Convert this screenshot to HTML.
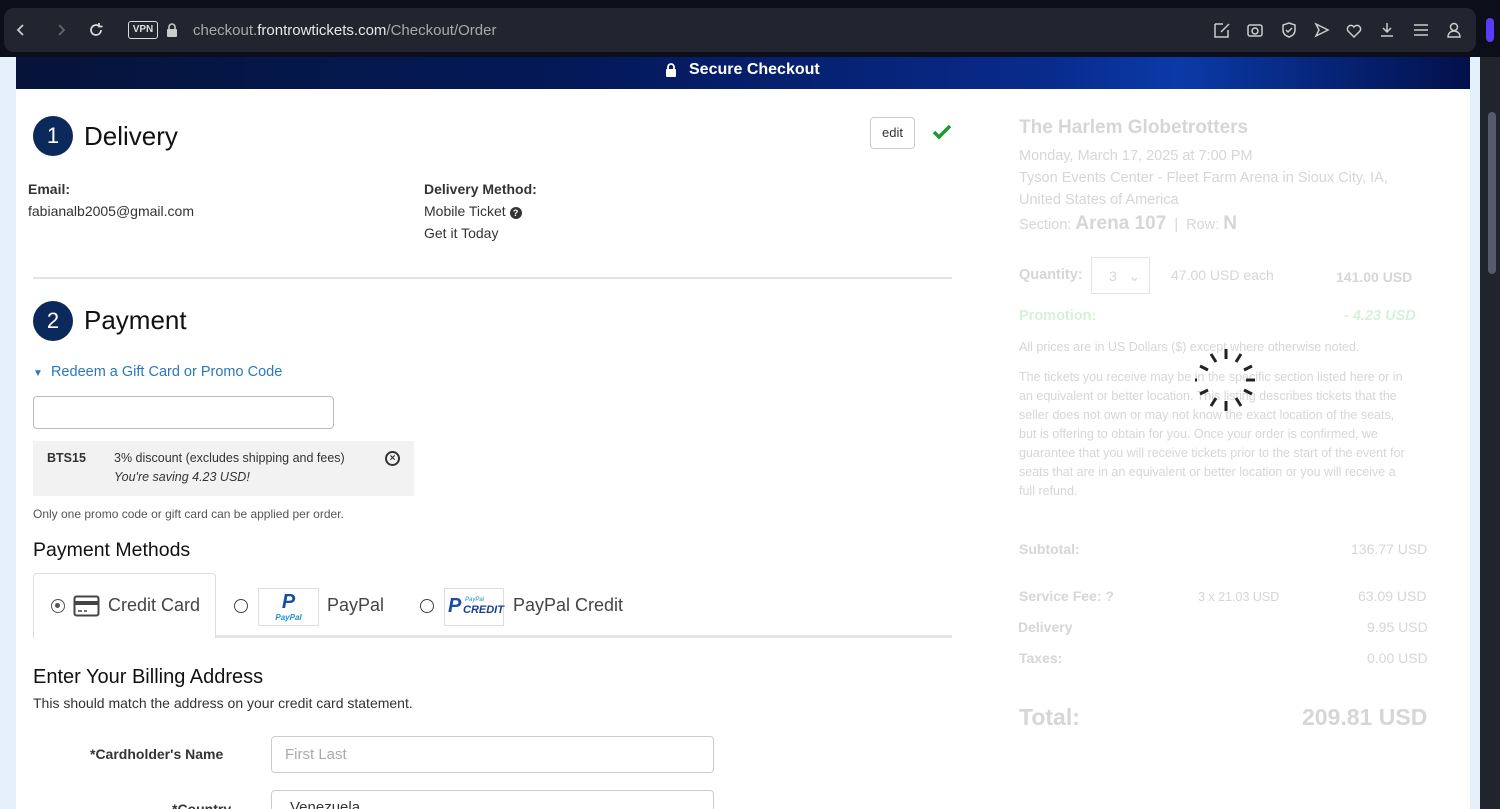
<!DOCTYPE html>
<html><head><meta charset="utf-8"><style>
*{margin:0;padding:0;box-sizing:border-box}
body{width:1500px;height:809px;overflow:hidden;background:#0c0e19;font-family:"Liberation Sans",Arial,sans-serif;position:relative}
.a{position:absolute;white-space:nowrap}
.tb{left:4px;top:8px;width:1472px;height:44px;background:#22242f;border-radius:10px}
.page{left:0;top:57px;width:1480px;height:752px;background:#fff;overflow:hidden}
.num{width:40px;height:40px;border-radius:50%;background:#0b2a5b;color:#fff;font-size:22px;text-align:center;line-height:40px}
.h2{font-size:26px;color:#111}
.g{color:#d6d6d6}
svg{position:absolute}
</style></head><body>
<div class="a tb"></div>
<svg style="left:14px;top:22px" width="14" height="16" viewBox="0 0 14 16"><path d="M9 3L4 8l5 5" stroke="#ccc" stroke-width="1.8" fill="none"/></svg>
<svg style="left:54px;top:22px" width="14" height="16" viewBox="0 0 14 16"><path d="M5 3l5 5-5 5" stroke="#666" stroke-width="1.8" fill="none"/></svg>
<svg style="left:87px;top:21px" width="18" height="18" viewBox="0 0 18 18"><path d="M14 9a5 5 0 1 1-2-4M12 2v3.5h3.5" stroke="#ddd" stroke-width="1.7" fill="none"/></svg>
<div class="a" style="left:128px;top:21px;width:30px;height:18px;border:1.5px solid #ddd;border-radius:3px;color:#ddd;font-size:10px;font-weight:bold;text-align:center;line-height:15px">VPN</div>
<svg style="left:165px;top:22px" width="14" height="16" viewBox="0 0 14 16"><rect x="2" y="7" width="10" height="8" rx="1" fill="#ccc"/><path d="M4 7V5a3 3 0 0 1 6 0v2" stroke="#ccc" stroke-width="1.6" fill="none"/></svg>
<div class="a" style="left:193px;top:22px;font-size:15px;color:#aaa">checkout.<span style="color:#e8e8e8">frontrowtickets.com</span>/Checkout/Order</div>
<svg style="left:1212px;top:20px" width="260" height="20" viewBox="0 0 260 20" fill="none" stroke="#ccc" stroke-width="1.5">
<path d="M3 4h8M3 4v13h13v-7M9 12l8-8"/>
<rect x="36" y="5" width="14" height="11" rx="2"/><circle cx="43" cy="11" r="3"/>
<path d="M77 3l6 2v5c0 4-3 6-6 7-3-1-6-3-6-7V5zM74 10l2 2 4-4"/>
<path d="M104 4l12 6-12 6 3-6z"/>
<path d="M142 17l-6-6a3.5 3.5 0 0 1 6-4 3.5 3.5 0 0 1 6 4z"/>
<path d="M175 3v9M171 8l4 4 4-4M169 16h12"/>
<path d="M202 5h14M202 10h14M202 15h14"/>
<circle cx="242" cy="7" r="3.5"/><path d="M236 17c0-4 3-6 6-6s6 2 6 6z"/>
</svg>
<div class="a" style="left:1486px;top:18px;width:8px;height:24px;background:#5b3cf5;border-radius:4px"></div>
<div class="a page">
 <div class="a" style="left:0;top:0;width:16px;height:752px;background:#e6f0fa"></div>
 <div class="a" style="left:1470px;top:0;width:10px;height:752px;background:#e4f0fb"></div>
 <div class="a" style="left:16px;top:0;width:1454px;height:32px;background:linear-gradient(90deg,#06143a,#04195a 40%,#082a8a 70%,#0a3aa8 80%,#03104a)"></div>
 <svg style="left:665px;top:6px" width="12" height="14" viewBox="0 0 12 14"><rect x="1" y="6" width="10" height="8" rx="1" fill="#fff"/><path d="M3 6V4a3 3 0 0 1 6 0v2" stroke="#fff" stroke-width="1.8" fill="none"/></svg>
 <div class="a" style="left:689px;top:4px;color:#fff;font-weight:bold;font-size:16px">Secure Checkout</div>

 <div class="a num" style="left:33px;top:59px">1</div>
 <div class="a h2" style="left:84px;top:64px">Delivery</div>
 <div class="a" style="left:870px;top:60px;width:45px;height:32px;border:1px solid #ccc;border-radius:4px;font-size:13px;text-align:center;line-height:30px;color:#333">edit</div>
 <svg style="left:932px;top:67px" width="20" height="16" viewBox="0 0 20 16"><path d="M2 8l5 5L18 2" stroke="#1e9a2a" stroke-width="3.5" fill="none"/></svg>
 <div class="a" style="left:28px;top:124px;font-size:14px;font-weight:bold;color:#333">Email:</div>
 <div class="a" style="left:28px;top:146px;font-size:14px;color:#333">fabianalb2005@gmail.com</div>
 <div class="a" style="left:424px;top:124px;font-size:14px;font-weight:bold;color:#333">Delivery Method:</div>
 <div class="a" style="left:424px;top:146px;font-size:14px;color:#333">Mobile Ticket <span style="display:inline-block;width:12px;height:12px;border-radius:50%;background:#333;color:#fff;font-size:9px;text-align:center;line-height:12px;font-weight:bold">?</span></div>
 <div class="a" style="left:424px;top:168px;font-size:14px;color:#333">Get it Today</div>
 <div class="a" style="left:33px;top:220px;width:919px;height:2px;background:#e4e4e4"></div>

 <div class="a num" style="left:33px;top:244px">2</div>
 <div class="a h2" style="left:84px;top:248px">Payment</div>
 <div class="a" style="left:33px;top:307px;font-size:14.5px;color:#2a77c0"><span style="font-size:10px">▼</span>&nbsp; Redeem a Gift Card or Promo Code</div>
 <div class="a" style="left:33px;top:339px;width:301px;height:33px;border:1px solid #bbb;border-radius:4px"></div>
 <div class="a" style="left:33px;top:384px;width:381px;height:55px;background:#f2f2f2"></div>
 <div class="a" style="left:47px;top:394px;font-size:12.5px;font-weight:bold;color:#333">BTS15</div>
 <div class="a" style="left:114px;top:394px;font-size:12.5px;color:#333">3% discount (excludes shipping and fees)</div>
 <div class="a" style="left:114px;top:413px;font-size:12.5px;font-style:italic;color:#333">You're saving 4.23 USD!</div>
 <div class="a" style="left:385px;top:394px;width:15px;height:15px;border:2px solid #333;border-radius:50%;font-size:10px;text-align:center;line-height:11px;font-weight:bold;color:#333">×</div>
 <div class="a" style="left:33px;top:450px;font-size:12px;color:#555">Only one promo code or gift card can be applied per order.</div>
 <div class="a" style="left:33px;top:482px;font-size:19.5px;color:#111">Payment Methods</div>
 <div class="a" style="left:33px;top:578px;width:919px;height:3px;background:#e4e4e4"></div>
 <div class="a" style="left:33px;top:516px;width:183px;height:65px;background:#fff;border:1px solid #ddd;border-bottom:none;border-radius:4px 4px 0 0"></div>
 <div class="a" style="left:51px;top:542px;width:14px;height:14px;border:1.5px solid #555;border-radius:50%"><div style="margin:3px;width:5px;height:5px;border-radius:50%;background:#555"></div></div>
 <svg style="left:73px;top:538px" width="27" height="22" viewBox="0 0 27 22"><rect x="1.5" y="1.5" width="24" height="19" rx="2" fill="none" stroke="#444" stroke-width="2"/><rect x="1.5" y="6" width="24" height="4" fill="#444"/><path d="M5 16h4M11 16h3" stroke="#444" stroke-width="1.5"/></svg>
 <div class="a" style="left:108px;top:538px;font-size:18px;color:#444">Credit Card</div>
 <div class="a" style="left:234px;top:542px;width:14px;height:14px;border:1.5px solid #444;border-radius:50%"></div>
 <div class="a" style="left:258px;top:531px;width:61px;height:38px;border:1px solid #ddd;text-align:center"><div style="font-size:20px;font-weight:bold;font-style:italic;color:#1b4f9e;line-height:22px;margin-top:2px">P</div><div style="font-size:8px;font-weight:bold;font-style:italic;color:#1b8fd6">PayPal</div></div>
 <div class="a" style="left:327px;top:538px;font-size:18px;color:#444">PayPal</div>
 <div class="a" style="left:420px;top:542px;width:14px;height:14px;border:1.5px solid #444;border-radius:50%"></div>
 <div class="a" style="left:444px;top:531px;width:60px;height:38px;border:1px solid #ddd"><span class="a" style="left:3px;top:6px;font-size:20px;font-weight:bold;font-style:italic;color:#1b4f9e">P</span><span class="a" style="left:20px;top:8px;font-size:6px;color:#1b8fd6;font-style:italic">PayPal</span><span class="a" style="left:18px;top:15px;font-size:11px;font-weight:bold;font-style:italic;color:#1b3f8e">CREDIT</span></div>
 <div class="a" style="left:513px;top:538px;font-size:18px;color:#444">PayPal Credit</div>

 <div class="a" style="left:33px;top:609px;font-size:20px;color:#111">Enter Your Billing Address</div>
 <div class="a" style="left:33px;top:638px;font-size:14px;color:#333">This should match the address on your credit card statement.</div>
 <div class="a" style="left:90px;top:689px;font-size:14px;font-weight:bold;color:#333">*Cardholder's Name</div>
 <div class="a" style="left:271px;top:679px;width:443px;height:37px;border:1px solid #ccc;border-radius:4px;padding:9px 13px;font-size:15px;color:#aaa">First Last</div>
 <div class="a" style="left:172px;top:744px;font-size:14px;font-weight:bold;color:#333">*Country</div>
 <div class="a" style="left:271px;top:733px;width:443px;height:37px;border:1px solid #ccc;border-radius:4px;padding:8px 18px;font-size:15px;color:#333">Venezuela</div>

 <div class="a g" style="left:1019px;top:60px;font-size:19px;font-weight:bold">The Harlem Globetrotters</div>
 <div class="a g" style="left:1019px;top:91px;font-size:14.5px">Monday, March 17, 2025 at 7:00 PM</div>
 <div class="a g" style="left:1019px;top:113px;font-size:14.5px">Tyson Events Center - Fleet Farm Arena in Sioux City, IA,</div>
 <div class="a g" style="left:1019px;top:135px;font-size:14.5px">United States of America</div>
 <div class="a g" style="left:1019px;top:156px;font-size:14.5px">Section: <b style="font-size:19px">Arena 107</b> &nbsp;| &nbsp;Row: <b style="font-size:19px">N</b></div>
 <div class="a g" style="left:1019px;top:210px;font-size:14.5px;font-weight:bold">Quantity:</div>
 <div class="a g" style="left:1091px;top:200px;width:59px;height:37px;border:1px solid #e4e4e4;font-size:14px;padding:10px 17px">3 &nbsp;&nbsp;⌄</div>
 <div class="a g" style="left:1171px;top:210px;font-size:14px">47.00 USD each</div>
 <div class="a g" style="left:1336px;top:212px;font-size:14px;font-weight:bold">141.00 USD</div>
 <div class="a" style="left:1019px;top:251px;font-size:14.5px;font-weight:bold;color:#d8f0da">Promotion:</div>
 <div class="a" style="left:1344px;top:251px;font-size:14.5px;font-weight:bold;font-style:italic;color:#d8f0da">- 4.23 USD</div>
 <div class="a g" style="left:1019px;top:283px;font-size:12.5px">All prices are in US Dollars ($) except where otherwise noted.</div>
 <div class="a g" style="left:1019px;top:311px;font-size:12.5px;line-height:19px;white-space:normal;width:396px">The tickets you receive may be in the specific section listed here or in an equivalent or better location. This listing describes tickets that the seller does not own or may not know the exact location of the seats, but is offering to obtain for you. Once your order is confirmed, we guarantee that you will receive tickets prior to the start of the event for seats that are in an equivalent or better location or you will receive a full refund.</div>
 <div class="a g" style="left:1019px;top:484px;font-size:14px;font-weight:bold">Subtotal:</div>
 <div class="a g" style="left:1351px;top:484px;font-size:14px">136.77 USD</div>
 <div class="a g" style="left:1019px;top:531px;font-size:14px;font-weight:bold">Service Fee: ?</div>
 <div class="a g" style="left:1198px;top:533px;font-size:12.5px">3 x 21.03 USD</div>
 <div class="a g" style="left:1358px;top:531px;font-size:14px">63.09 USD</div>
 <div class="a g" style="left:1018px;top:562px;font-size:14px;font-weight:bold">Delivery</div>
 <div class="a g" style="left:1367px;top:562px;font-size:14px">9.95 USD</div>
 <div class="a g" style="left:1019px;top:593px;font-size:14px;font-weight:bold">Taxes:</div>
 <div class="a g" style="left:1367px;top:593px;font-size:14px">0.00 USD</div>
 <div class="a g" style="left:1019px;top:647px;font-size:23px;font-weight:bold">Total:</div>
 <div class="a g" style="left:1302px;top:647px;font-size:23px;font-weight:bold">209.81 USD</div>
 <svg style="left:1195px;top:290px" width="62" height="66" viewBox="-31 -33 62 66" stroke="#222" stroke-width="3">
  <path d="M0-31v10M0 21v10M-29 0h-9M20 0h9"/>
  <path d="M-15-26l5 8M15-26l-5 8M-15 26l5-8M15 26l-5-8M-26-14l8 4M26-14l-8 4M-26 14l8-4M26 14l-8-4"/>
 </svg>
</div>
<div class="a" style="left:1480px;top:57px;width:20px;height:752px;background:#21232d"></div>
<div class="a" style="left:1488px;top:112px;width:8px;height:162px;background:#555a6e;border-radius:4px"></div>
</body></html>
